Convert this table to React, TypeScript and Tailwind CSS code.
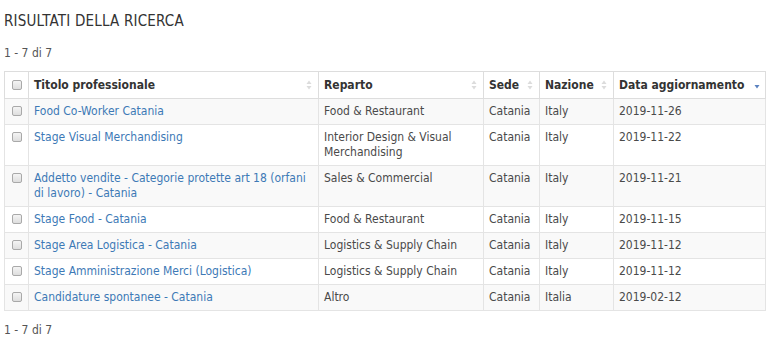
import React from "react";

const rows = [
  { t: "Food Co-Worker Catania", r: "Food & Restaurant", s: "Catania", n: "Italy", d: "2019-11-26" },
  { t: "Stage Visual Merchandising", r: "Interior Design & Visual Merchandising", s: "Catania", n: "Italy", d: "2019-11-22" },
  { t: "Addetto vendite - Categorie protette art 18 (orfani di lavoro) - Catania", r: "Sales & Commercial", s: "Catania", n: "Italy", d: "2019-11-21" },
  { t: "Stage Food - Catania", r: "Food & Restaurant", s: "Catania", n: "Italy", d: "2019-11-15" },
  { t: "Stage Area Logistica - Catania", r: "Logistics & Supply Chain", s: "Catania", n: "Italy", d: "2019-11-12" },
  { t: "Stage Amministrazione Merci (Logistica)", r: "Logistics & Supply Chain", s: "Catania", n: "Italy", d: "2019-11-12" },
  { t: "Candidature spontanee - Catania", r: "Altro", s: "Catania", n: "Italia", d: "2019-02-12" },
];

function SortBoth() {
  return (
    <svg width="6" height="10" viewBox="0 0 6 10" className="absolute right-[6px] top-1/2 -translate-y-1/2">
      <path d="M3 0.5 L5.5 4 L0.5 4 Z" fill="#dcdcdc" />
      <path d="M3 9.5 L5.5 6 L0.5 6 Z" fill="#dcdcdc" />
    </svg>
  );
}

function SortDesc() {
  return (
    <svg width="6" height="10" viewBox="0 0 6 10" className="absolute right-[5px] top-1/2 -translate-y-1/2">
      <path d="M3 8.5 L5.5 5 L0.5 5 Z" fill="#5b82c0" />
    </svg>
  );
}

function Check() {
  return (
    <span className="inline-block w-[10px] h-[10px] rounded-[2px] border border-[#a9a9a9] bg-gradient-to-b from-[#f4f4f4] to-[#dedede] align-middle" />
  );
}

export default function App() {
  const font = { fontFamily: '"DejaVu Sans Condensed", "DejaVu Sans", Verdana, sans-serif' };
  return (
    <div className="bg-white w-[768px] h-[346px] pl-[4px] pr-[3px] pt-[12px] text-[#4a4a4a] font-stretch-condensed" style={font}>
      <h1 className="text-[15px] leading-[18px] text-[#333] tracking-[0.2px]">RISULTATI DELLA RICERCA</h1>
      <div className="mt-[16px] text-[12px] leading-[15px] text-[#555]">1 - 7 di 7</div>
      <table className="mt-[10px] w-[761px] table-fixed border-collapse border border-[#dddddd] text-[12px] leading-[15px]">
        <colgroup>
          <col className="w-[24px]" />
          <col className="w-[290px]" />
          <col className="w-[165px]" />
          <col className="w-[56px]" />
          <col className="w-[74px]" />
          <col className="w-[152px]" />
        </colgroup>
        <thead>
          <tr className="bg-white">
            <th className="border border-[#dddddd] h-[27px] px-[4px] text-center align-middle">
              <Check />
            </th>
            <th className="relative border border-[#dddddd] px-[5px] text-left font-bold text-[#333]">
              Titolo professionale
              <SortBoth />
            </th>
            <th className="relative border border-[#dddddd] px-[5px] text-left font-bold text-[#333]">
              Reparto
              <SortBoth />
            </th>
            <th className="relative border border-[#dddddd] px-[5px] text-left font-bold text-[#333]">
              Sede
              <SortBoth />
            </th>
            <th className="relative border border-[#dddddd] px-[5px] text-left font-bold text-[#333]">
              Nazione
              <SortBoth />
            </th>
            <th className="relative border border-[#dddddd] px-[5px] text-left font-bold text-[#333]">
              Data aggiornamento
              <SortDesc />
            </th>
          </tr>
        </thead>
        <tbody>
          {rows.map((row, i) => (
            <tr key={i} className={i % 2 === 0 ? "bg-[#f9f9f9]" : "bg-white"}>
              <td className="border border-[#e4e4e4] px-[4px] pt-[5px] pb-[5px] align-top text-center">
                <span className="relative top-[-1px]"><Check /></span>
              </td>
              <td className="border border-[#e4e4e4] px-[5px] py-[5px] align-top text-[#3d79b6]">{row.t}</td>
              <td className="border border-[#e4e4e4] px-[5px] py-[5px] align-top">{row.r}</td>
              <td className="border border-[#e4e4e4] px-[5px] py-[5px] align-top">{row.s}</td>
              <td className="border border-[#e4e4e4] px-[5px] py-[5px] align-top">{row.n}</td>
              <td className="border border-[#e4e4e4] px-[5px] py-[5px] align-top">{row.d}</td>
            </tr>
          ))}
        </tbody>
      </table>
      <div className="mt-[12px] text-[12px] leading-[15px] text-[#555]">1 - 7 di 7</div>
    </div>
  );
}
